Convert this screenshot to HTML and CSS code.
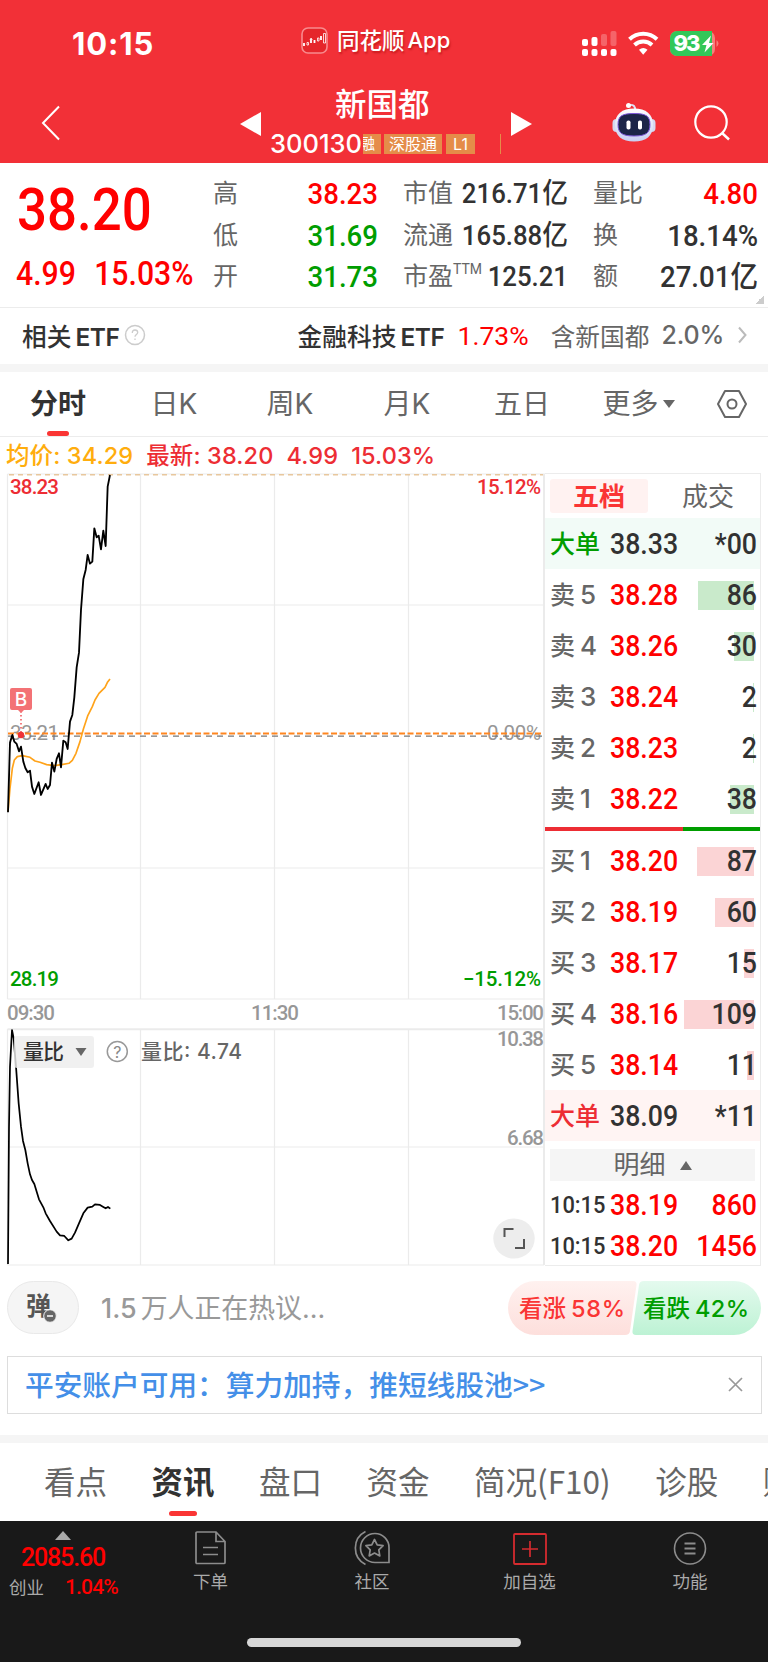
FILE: index.html
```
<!DOCTYPE html>
<html lang="zh-CN">
<head>
<meta charset="utf-8">
<title>新国都 300130</title>
<link rel="stylesheet" href="styles.css">
</head>
<body>
<div class="app">
  <header class="header">
    <div class="status">
      <div class="status-time">10:15</div>
      <div class="status-app">
        <svg width="27" height="27" viewBox="0 0 27 27"><rect x="1" y="1" width="25" height="25" rx="6" fill="#e5262b" stroke="#f88b8e" stroke-width="1.6"/><path d="M3 16v3M10 12v4M13.500 13v3M20 9v4" stroke="#fff" stroke-width="1.800"/><path d="M6 15.500h1.500v2.500H6zM16.500 11H18v3h-1.500zM22.500 6.500h2v9.500h-2zM9 12.500l1-1.500 1.500 1.500" fill="none" stroke="#fff" stroke-width=".8"/></svg>
        <span>同花顺</span><span class="app-en">App</span>
      </div>
      <svg class="status-icons" width="140" height="26" viewBox="0 0 140 26">
        <g fill="#fff"><rect x="0" y="8" width="6" height="7" rx="2"/><rect x="9.500" y="6" width="6" height="9" rx="2"/><rect x="0" y="18" width="6" height="7" rx="2"/><rect x="9.500" y="18" width="6" height="7" rx="2"/><rect x="19" y="18" width="6" height="7" rx="2"/><rect x="28.500" y="18" width="6" height="7" rx="2"/></g>
        <g fill="#fff" opacity=".25"><rect x="19" y="3" width="6" height="12" rx="2"/><rect x="28.500" y="0" width="6" height="15" rx="2"/></g>
        <g fill="none" stroke="#fff" stroke-width="4"><path d="M47.500 8.300a20 20 0 0 1 27.500 0"/><path d="M52.500 14a13 13 0 0 1 17.500 0"/></g>
        <path d="M57 18.700a7 7 0 0 1 8.500 0L61.200 23.700z" fill="#fff"/>
        <rect x="88" y="0" width="45" height="25" rx="7" fill="#f77f7c"/>
        <path d="M95 0h35v25h-35a7 7 0 0 1-7-7V7a7 7 0 0 1 7-7z" fill="#32c759"/>
        <path d="M134.500 9q4 3.500 0 7z" fill="#f77f7c"/>
        <text x="91.500" y="20" class="battery-text" textLength="27">93</text>
        <path d="M129 4.500l-9 9.500h4.500l-2 7.500 9-9.500h-4.500z" fill="#fff"/>
      </svg>
    </div>
    <div class="nav">
      <svg class="back" width="20" height="36" viewBox="0 0 20 36"><path d="M18 1.500L2 18l16 16.500" fill="none" stroke="#fff" stroke-width="2"/></svg>
      <svg class="prev" width="21" height="24" viewBox="0 0 21 24"><path d="M21 0v24L0 12z" fill="#fff"/></svg>
      <div class="stock">
        <h1>新国都</h1>
        <div class="code-row"><span class="code">300130</span><span class="tag tag-cut">融</span><span class="tag tag-wide">深股通</span><span class="tag tag-l1">L1</span><span class="tag-edge"></span></div>
      </div>
      <svg class="next" width="21" height="24" viewBox="0 0 21 24"><path d="M0 0v24l21-12z" fill="#fff"/></svg>
      <svg class="robot" width="44" height="40" viewBox="0 0 44 40">
        <defs><linearGradient id="shell" x1="0" y1="0" x2="0" y2="1"><stop offset="0" stop-color="#fff"/><stop offset="1" stop-color="#c9cff2"/></linearGradient></defs>
        <path d="M17 3q7-1 6 6" fill="none" stroke="#dfe1f4" stroke-width="2"/><circle cx="16.500" cy="3.500" r="2.500" fill="#fff"/>
        <rect x=".5" y="17" width="9" height="13" rx="4" fill="#d5d8f0"/><rect x="34.500" y="17" width="9" height="13" rx="4" fill="#d5d8f0"/>
        <path d="M22 6.500C34 6.500 41 12 41 23S34 39.500 22 39.500 3 34 3 23 10 6.500 22 6.500z" fill="url(#shell)"/>
        <path d="M22 11.500C34 11.500 38 14 38 22.500S34 34 22 34 6 31 6 22.500 10 11.500 22 11.500z" fill="#1c2548" stroke="#7d57d9"/>
        <rect x="14.500" y="18.500" width="4" height="9" rx="1.800" fill="#fff"/><rect x="26" y="18.500" width="4" height="9" rx="1.800" fill="#fff"/>
      </svg>
      <svg class="search" width="36" height="36" viewBox="0 0 36 36"><circle cx="17" cy="17" r="15.700" fill="none" stroke="#fff" stroke-width="2.200"/><path d="M28 28l7 6.500" stroke="#fff" stroke-width="2.500"/></svg>
    </div>
  </header>

  <section class="quote">
    <div class="last">
      <div class="last-price"><span>38.20</span></div>
      <div class="last-change"><span>4.99</span><span class="pct">15.03%</span></div>
    </div>
    <div class="stats">
      <dl><dt>高</dt><dd class="up">38.23</dd><dt>低</dt><dd class="down">31.69</dd><dt>开</dt><dd class="down">31.73</dd></dl>
      <dl><dt>市值</dt><dd>216.71亿</dd><dt>流通</dt><dd>165.88亿</dd><dt>市盈<sup>TTM</sup></dt><dd>125.21</dd></dl>
      <dl><dt>量比</dt><dd class="up">4.80</dd><dt>换</dt><dd class="wide">18.14%</dd><dt>额</dt><dd class="wide">27.01亿</dd></dl>
    </div>
    <i class="corner"></i>
  </section>

  <section class="etf">
    <b>相关<span class="etf-latin">ETF</span></b>
    <svg class="etf-help" width="22" height="22" viewBox="0 0 22 22"><circle cx="11" cy="11" r="9.500" fill="none" stroke="#ccc" stroke-width="1.500"/><path d="M8.300 9q0-3 2.700-3t2.700 2.500c0 1.800-2.700 2.200-2.700 4.200M11 14.500v1.500" fill="none" stroke="#ccc" stroke-width="1.300"/></svg>
    <b class="etf-name">金融科技<span class="etf-latin">ETF</span></b>
    <span class="etf-rate din">1.73%</span>
    <span class="etf-part">含新国都</span>
    <span class="etf-weight">2.0%</span>
    <svg width="9" height="18" viewBox="0 0 9 18"><path d="M1 1.500l6.500 7.500L1 16.500" fill="none" stroke="#bbb" stroke-width="2"/></svg>
  </section>
  <div class="band"></div>

  <nav class="periods">
    <span class="active">分时</span><span>日K</span><span>周K</span><span>月K</span><span>五日</span><span class="more">更多<i></i></span>
    <svg width="32" height="30" viewBox="0 0 32 30"><path d="M9 2h14l7 13-7 13H9L2 15z" fill="none" stroke="#666" stroke-width="2" stroke-linejoin="round"/><circle cx="16" cy="15" r="4.500" fill="none" stroke="#666" stroke-width="2"/></svg>
  </nav>
  <div class="readout"><span class="avg">均价: 34.29</span><span>最新: 38.20</span><span>4.99</span><span>15.03%</span></div>

  <main class="market">
    <svg class="chart" width="545" height="793" viewBox="0 473 545 793">
      <g fill="none" stroke="#ebebeb" stroke-width="1.200">
        <path d="M7.500 474H761M7.500 605H544M7.500 868H544M7.500 999H544M7.500 1147H544M7.500 1265H544"/>
        <path d="M7.500 1029.300H544" stroke-width="2"/>
        <path d="M7.500 474V999M7.500 1029V1265M140.500 474V999M140.500 1029V1265M274.500 474V999M274.500 1029V1265M408.500 474V999M408.500 1029V1265"/>
        <path d="M544 474V1265" stroke-width="2"/>
      </g>
      <path d="M9 474.700H543" stroke="#e8c79d" stroke-width="1.500" stroke-dasharray="5 4"/>
      <g class="axis">
        <text x="10" y="735" dy="4.500" class="flat" textLength="49">33.21</text>
        <text x="487" y="735" dy="4.500" class="flat" textLength="54">0.00%</text>
      </g>
      <path d="M8 733.500H543" stroke="#ff8620" stroke-width="2" stroke-dasharray="6 2.500"/>
      <path d="M8 736.200H543" stroke="#777" stroke-width="1.200" stroke-dasharray="6 5"/>
      <g class="axis">
        <text x="10" y="494" class="t-red" textLength="49">38.23</text>
        <text x="477" y="494" class="t-red" textLength="64">15.12%</text>
        <text x="10" y="986" class="t-green" textLength="49">28.19</text>
        <text x="463" y="986" class="t-green" textLength="78">−15.12%</text>
        <text x="7" y="1020" textLength="48">09:30</text>
        <text x="251" y="1020" textLength="48">11:30</text>
        <text x="497" y="1020" textLength="47">15:00</text>
        <text x="497" y="1046" textLength="47">10.38</text>
        <text x="507" y="1145" textLength="37">6.68</text>
      </g>
      <g fill="none" stroke-linejoin="round">
        <g transform="translate(0 460) scale(.3333)">
          <path d="M24 1055L30 985 37 925 43 900 52 890 67 887 90 892 105 903 120 907 140 914 163 917 185 914 207 910 217 901 228 880 240 845 250 808 263 768 277 740 285 720 297 700 315 682 323 666 330 657" stroke="#ffa31a" stroke-width="5"/>
          <path d="M24 1057L30 848 37 825 43 845 50 852 57 874 63 860 70 905 76 924 83 937 90 932 96 980 103 1002 116 967 123 1005 137 972 143 987 150 975 156 908 163 935 170 897 177 880 183 922 190 842 197 847 203 867 210 785 217 765 223 712 230 622 237 578 243 450 250 358 257 330 263 285 270 311 277 305 283 205 290 232 296 227 303 268 310 212 317 258 323 80 330 45" stroke="#000" stroke-width="5.500"/>
        </g>
      </g>
      <path d="M21 711V733" stroke="#ef5055" stroke-width="1.500" stroke-dasharray="1.500 2.500"/>
      <circle cx="21" cy="735" r="3.200" fill="#ee3338"/>
      <path d="M12 688h18a2 2 0 0 1 2 2v18a2 2 0 0 1-2 2h-6l-3 3-3-3h-6a2 2 0 0 1-2-2v-18a2 2 0 0 1 2-2z" fill="#f37275"/>
      <text x="21" y="706" class="buy-mark">B</text>
      <path transform="translate(0 960) scale(.3333)" d="M24 912L27 500 30 320 36 210 41 235 48 320 56 430 63 500 69 543 76 570 83 610 90 643 96 660 103 672 117 718 130 742 137 760 150 783 170 815 180 826 193 828 205 841 215 836 225 818 237 790 250 760 263 743 277 740 285 733 300 735 310 741 317 745 324 741 331 746" fill="none" stroke="#000" stroke-width="5.200" stroke-linejoin="round"/>
      <rect x="14" y="1036" width="80" height="32" rx="3" fill="#ededed" opacity=".82"/>
      <text x="23" y="1059" class="ind-name" textLength="41">量比</text>
      <path d="M75.500 1048h11l-5.500 8z" fill="#666"/>
      <circle cx="117.300" cy="1051.500" r="10" fill="none" stroke="#999" stroke-width="1.500"/>
      <text x="117.300" y="1057.500" class="help-mark">?</text>
      <text x="141" y="1059" class="ind-value" textLength="101">量比: 4.74</text>
      <ellipse cx="514" cy="1238.500" rx="20.700" ry="20" fill="#ededed"/>
      <path d="M504.500 1237V1229H513.500M515 1248H524V1239" fill="none" stroke="#555" stroke-width="2"/>
    </svg>

    <aside class="book">
      <div class="book-tabs"><span class="active">五档</span><span>成交</span></div>
      <div class="row big-sell"><span class="big">大单</span><span class="price">38.33</span><span class="vol">*00</span></div>
      <div class="row sell"><span>卖<em>5</em></span><span class="price">38.28</span><i style="width:56px"></i><span class="vol">86</span></div>
      <div class="row sell"><span>卖<em>4</em></span><span class="price">38.26</span><i style="width:20px"></i><span class="vol">30</span></div>
      <div class="row sell"><span>卖<em>3</em></span><span class="price">38.24</span><i style="width:1px"></i><span class="vol">2</span></div>
      <div class="row sell"><span>卖<em>2</em></span><span class="price">38.23</span><i style="width:1px"></i><span class="vol">2</span></div>
      <div class="row sell"><span>卖<em>1</em></span><span class="price">38.22</span><i style="width:24px"></i><span class="vol">38</span></div>
      <div class="ratio"><i style="width:64.300%"></i></div>
      <div class="row buy"><span>买<em>1</em></span><span class="price">38.20</span><i style="width:57px"></i><span class="vol">87</span></div>
      <div class="row buy"><span>买<em>2</em></span><span class="price">38.19</span><i style="width:39px"></i><span class="vol">60</span></div>
      <div class="row buy"><span>买<em>3</em></span><span class="price">38.17</span><i style="width:10px"></i><span class="vol">15</span></div>
      <div class="row buy"><span>买<em>4</em></span><span class="price">38.16</span><i style="width:70px"></i><span class="vol">109</span></div>
      <div class="row buy"><span>买<em>5</em></span><span class="price">38.14</span><i style="width:7px"></i><span class="vol">11</span></div>
      <div class="row big-buy"><span class="big">大单</span><span class="price">38.09</span><span class="vol">*11</span></div>
      <div class="detail">明细<i></i></div>
      <div class="trade"><span class="time">10:15</span><span class="price">38.19</span><span class="vol">860</span></div>
      <div class="trade"><span class="time">10:15</span><span class="price">38.20</span><span class="vol">1456</span></div>
    </aside>
  </main>

  <section class="talk">
    <div class="danmu"><span>弹</span><svg width="14" height="14" viewBox="0 0 14 14"><circle cx="7" cy="7" r="6.300" fill="#666" stroke="#f5f5f5"/><path d="M4 7h6" stroke="#fff" stroke-width="1.500"/></svg></div>
    <div class="talk-text"><span class="talk-num">1.5</span>万人正在热议…</div>
    <div class="vote">
      <svg width="253" height="54" viewBox="0 0 253 54">
        <defs><linearGradient id="rise" x1="0" y1="0" x2="0" y2="1"><stop offset="0" stop-color="#fff1ef"/><stop offset="1" stop-color="#fddfdc"/></linearGradient><linearGradient id="fall" x1="0" y1="0" x2="0" y2="1"><stop offset="0" stop-color="#e4faee"/><stop offset="1" stop-color="#bdf2d4"/></linearGradient></defs>
        <path d="M27 0H125Q129 0 128.500 4L122 50Q121.500 54 117 54H27A27 27 0 0 1 27 0z" fill="url(#rise)"/>
        <path d="M136 0H226A27 27 0 0 1 226 54H128Q124 54 124.500 50L131 4Q131.500 0 136 0z" fill="url(#fall)"/>
        <g class="vote-up"><text x="11" y="36">看涨</text><text x="63" y="35.500" textLength="54">58%</text></g>
        <g class="vote-down"><text x="135" y="36">看跌</text><text x="187" y="35.500" textLength="54">42%</text></g>
      </svg>
    </div>
  </section>

  <section class="notice">
    <span>平安账户可用：算力加持，推短线股池&gt;&gt;</span>
    <svg width="15" height="15" viewBox="0 0 15 15"><path d="M1 1l13 13M14 1L1 14" stroke="#999" stroke-width="1.700"/></svg>
  </section>
  <div class="band band-low"></div>

  <nav class="topics"><span>看点</span><span class="active">资讯</span><span>盘口</span><span>资金</span><span class="profile">简况(F10)</span><span>诊股</span><span>财务</span></nav>

  <footer class="dock">
    <div class="index"><i></i><b>2085.60</b><div><span>创业</span><em>1.04%</em></div></div>
    <div class="dock-item order"><svg width="32" height="36" viewBox="0 0 32 36"><g fill="none" stroke="#8c8c8c" stroke-width="1.700"><path d="M3 2H21L30 11.500V32.500a1 1 0 0 1-1 1H2a1 1 0 0 1-1-1V3a1 1 0 0 1 1-1zM21 2V11.500H30M8 17.500H23M8 24.500H23"/></g></svg><span>下单</span></div>
    <div class="dock-item club"><svg width="36" height="36" viewBox="0 0 36 36"><g fill="none" stroke="#8c8c8c" stroke-width="1.700"><path d="M21 3.500A14 14 0 0 1 35 17.500V32.500H21A14.500 14.500 0 0 1 21 3.500zM11.500 1.500A18.500 18.500 0 0 0 11.500 34.500"/><path stroke-linejoin="round" d="M20.500 9.500l2.700 5.300 5.900.9-4.300 4.200 1 6-5.300-2.800-5.300 2.800 1-6-4.300-4.200 5.900-.9z"/></g></svg><span>社区</span></div>
    <div class="dock-item add"><svg width="36" height="36" viewBox="0 0 36 36"><rect x="2" y="4" width="32" height="30" rx="1" fill="none" stroke="#d42b2f" stroke-width="1.800"/><path d="M18 11v16M10 19h16" stroke="#d42b2f" stroke-width="1.700"/></svg><span>加自选</span></div>
    <div class="dock-item tools"><svg width="34" height="36" viewBox="0 0 34 36"><circle cx="17" cy="18.500" r="15.500" fill="none" stroke="#8c8c8c" stroke-width="1.600"/><path d="M11.500 13.500h11M11.500 18.500h11M11.500 23.500h11" stroke="#8c8c8c" stroke-width="1.800"/></svg><span>功能</span></div>
    <i class="home"></i>
  </footer>
</div>
</body>
</html>
```
FILE: styles.css
```
* { box-sizing: border-box; }
body { margin: 0; background: #fff; font-family: Inter, "Noto Sans CJK SC", sans-serif; color: #323232; }
i, em { font-style: normal; }
svg { display: block; flex: none; }
.app { width: 768px; height: 1662px; overflow: hidden; }
.din { font-family: Roboto, "Noto Sans CJK SC", sans-serif; }

.header { height: 163px; background: #f23037; color: #fff; }
.status { display: flex; height: 84px; padding-top: 27px; }
.status-time { width: 301px; padding-left: 72px; font-size: 31px; line-height: 34px; font-weight: 700; letter-spacing: .9px; }
.status-app { display: flex; width: 281px; height: 27px; line-height: 27px; font-size: 23px; font-weight: 500; text-shadow: 1px 2px 2px #9007; }
.status-app span:nth-child(2) { margin-left: 9px; font-size: 22.500px; }
.app-en { margin-left: 3px; font-size: 22px; }
.status-icons { margin-top: 4px; }
.battery-text { font: 800 22px Inter, sans-serif; fill: #fff; }
.nav { display: flex; height: 79px; align-items: flex-start; }
.back { margin: 21px 0 0 41px; }
.prev { margin: 28px 0 0 179px; }
.stock { width: 242px; margin-left: 9px; }
.next { margin: 28px 0 0 -1px; }
.robot { margin: 18px 0 0 80px; }
.search { margin: 21px 0 0 38px; }
h1 { margin: 2px 0 0 65px; font-size: 31.500px; line-height: 38px; font-weight: 500; }
.code-row { display: flex; height: 26px; margin-top: 6px; }
.code { width: 93px; font-size: 25.500px; line-height: 27px; letter-spacing: 0; font-weight: 500; white-space: nowrap; }
.tag { height: 20px; margin-top: 4px; background: #e58c49; line-height: 20px; text-align: center; white-space: nowrap; }
.tag-cut { display: flex; justify-content: flex-end; width: 18px; padding-right: 6px; overflow: hidden; font-size: 15px; }
.tag-wide { width: 58px; margin-left: 3px; font-size: 16px; }
.tag-l1 { width: 29px; margin-left: 4px; font-size: 16px; }
.tag-edge { width: 1px; height: 20px; margin: 4px 0 0 25px; background: #e58c49; }

.quote { display: flex; position: relative; height: 145px; border-bottom: 1px solid #ececec; font-family: Roboto, "Noto Sans CJK SC", sans-serif; font-weight: 500; }
.last { width: 213px; color: #f00; white-space: nowrap; }
.last-price { height: 78px; margin: 8px 0 0 17px; font-size: 60px; line-height: 78px; transform: scaleX(.88); transform-origin: left; }
.last-change { display: flex; height: 40px; font-size: 33px; line-height: 40px; margin: 5px 0 0 16px; transform: scaleX(.915); transform-origin: left; }
.pct { margin-left: 20px; }
.stats { display: grid; grid-template-columns: 164px 164px 164px; column-gap: 26px; padding-top: 10px; }
.stats dl { display: grid; grid-template-columns: 50px 115px; grid-auto-rows: 41.500px; margin: 0; line-height: 41.500px; white-space: nowrap; }
dt { color: #666; font-size: 25px; font-weight: 400; }
dd { display: flex; justify-content: flex-end; margin: 0; font-size: 30px; transform: scaleX(.92); transform-origin: right; }
dl:nth-child(2) dd { font-size: 28px; transform: scaleX(.92); }
sup { font-size: 14px; line-height: 1; vertical-align: 11px; }
.up { color: #f00; }
.down { color: #009d00; }
.corner { position: absolute; right: 4px; bottom: 3px; width: 9px; height: 9px; background: linear-gradient(135deg, #fff 50%, #ccc 50%); }
.etf { display: flex; align-items: center; height: 56px; padding: 0 21px 2px 22px; font-size: 24.700px; white-space: nowrap; }
.etf b { font-weight: 500; }
.etf-latin { margin-left: 4px; font-size: 24.500px; font-weight: 600; letter-spacing: -.4px; }
.etf-help { margin-left: 4px; }
.etf-name { margin-left: 152px; }
.etf-rate { margin-left: 13px; color: #f00; font-size: 26.500px; }
.etf-part { margin-left: 22px; color: #666; }
.etf-weight { flex: 1; margin-left: 12px; color: #666; font-size: 25px; letter-spacing: -.1px; font-weight: 500; }
.band { height: 8px; background: #f5f5f5; }
.periods { display: grid; grid-template-columns: 116px 116px 116px 118px 112px 114px 76px; height: 65px; border-bottom: 1px solid #ececec; align-items: start; font-size: 28px; line-height: 65px; color: #666; font-weight: 400; text-align: center; }
.periods svg { margin: 17px 0 0 24px; }
.periods .active { color: #323232; font-weight: 700; position: relative; }
.periods .active::after { content: ""; position: absolute; left: 47px; top: 59px; width: 22px; height: 5px; border-radius: 3px; background: #fa3534; }
.periods .more { padding-left: 7px; }
.more i { display: inline-block; margin: 0 0 6px 4px; border: 6px solid transparent; border-top: 8px solid #666; border-bottom: 0; }
.readout { display: flex; gap: 13px; height: 36px; padding-left: 6px; color: #ed2d34; font-size: 23.500px; line-height: 38px; letter-spacing: .12px; font-weight: 500; white-space: nowrap; }
.avg { color: #ffad0d; }

.market { display: flex; height: 793px; }
.axis text { font-family: Roboto, sans-serif; font-size: 20.500px; font-weight: 500; fill: #979797; }
.axis .flat { font-weight: 400; }
.axis .t-red { fill: #ed2d34; }
.axis .t-green { fill: #009d00; }
.buy-mark { font: 500 19px Inter, sans-serif; fill: #fff; text-anchor: middle; }
.ind-name { font: 500 21px "Noto Sans CJK SC", sans-serif; fill: #323232; }
.ind-value { font: 500 21px Inter, "Noto Sans CJK SC", sans-serif; fill: #666; }
.help-mark { font: 400 16px Inter, sans-serif; fill: #888; text-anchor: middle; }
.book { width: 216px; border: 1px solid #ececec; border-left: 0; }
.book-tabs { display: flex; height: 44px; padding: 5px 0 0 5px; font-size: 26px; line-height: 36px; color: #666; }
.book-tabs span { width: 98px; height: 34px; text-align: center; }
.book-tabs span + span { margin-left: 11px; }
.book-tabs .active { background: #fff2f1; color: #fa3534; font-weight: 700; border-radius: 3px; }
.row, .trade { display: grid; grid-template-columns: 60px 74px 73px; align-items: center; height: 51px; padding-left: 5px; font-size: 25px; line-height: 52px; color: #666; font-weight: 500; white-space: nowrap; }
.row > *, .trade > * { grid-row: 1; }
.row em { margin-left: 5px; font-size: 26px; }
.price, .vol { font: 500 29.500px/52px Roboto, sans-serif; color: #f00; transform: scaleX(.905); transform-origin: left; }
.price { grid-column: 2; }
.vol { grid-column: 3; color: #323232; transform-origin: right; text-align: right; z-index: 1; }
.row i { grid-column: 3; justify-self: end; height: 29px; margin-right: 3px; background: #c9eacb; }
.buy i { background: #fbd4d5; }
.big-sell { background: #f2fbf7; }
.big-buy { background: #fff4f3; }
.big-sell .big { color: #009d00; }
.big-buy .big { color: #ed2d34; }
.big-sell, .big-buy, .big-sell .price, .big-buy .price, .big-sell .vol, .big-buy .vol { line-height: 53px; }
.big-sell .price, .big-buy .price { color: #323232; }
.ratio { height: 4px; margin: 3px 0 4px; background: #009d00; }
.ratio i { display: block; height: 4px; background: #ed2d34; }
.detail { display: flex; justify-content: center; align-items: center; gap: 14px; height: 32px; margin: 8px 5px 3px; background: #f5f5f5; font-size: 26px; line-height: 32px; color: #666; }
.detail i { border: 6px solid transparent; border-bottom: 9px solid #666; border-top: 0; }
.trade { height: 41px; line-height: 43px; }
.trade .price, .trade .vol { line-height: 43px; color: #f00; }
.time { font-family: Roboto, sans-serif; font-size: 24px; color: #323232; transform: scaleX(.91); transform-origin: left; }

.talk { display: flex; height: 90px; padding-top: 15px; }
.danmu { display: flex; width: 72px; height: 53px; margin-left: 7px; border: 1px solid #e9e9e9; border-radius: 27px; background: #f5f5f5; padding-left: 18px; font-size: 25px; line-height: 49px; font-weight: 700; color: #555; }
.danmu svg { margin: 27px 0 0 -8px; }
.talk-text { width: 407px; margin-left: 22px; font-size: 26.900px; line-height: 54px; color: #999; white-space: nowrap; }
.talk-num { margin-right: 4px; font-weight: 500; }
.vote-up, .vote-down { font: 500 23.500px Inter, "Noto Sans CJK SC", sans-serif; fill: #fa3534; }
.vote-down { fill: #009d00; }
.notice { display: flex; justify-content: space-between; align-items: center; width: 755px; height: 58px; margin-left: 7px; padding: 0 18px 3px 17px; border: 1px solid #ddd; color: #448fe8; font-family: "Noto Sans CJK SC", sans-serif; font-size: 28.700px; font-weight: 500; white-space: nowrap; }
.notice svg { margin-top: 2px; }
.band-low { margin-top: 21px; }
.topics { display: flex; gap: 44.500px; height: 78px; padding-left: 44px; overflow: hidden; font-size: 31.500px; line-height: 75px; color: #666; white-space: nowrap; font-family: "Noto Sans CJK SC", sans-serif; }
.topics span { flex: none; }
.topics .active { position: relative; font-weight: 700; color: #323232; }
.topics .active::after { content: ""; position: absolute; left: 17px; top: 68px; width: 28px; height: 5px; border-radius: 3px; background: #fa3534; }
.dock { position: relative; display: grid; grid-template-columns: 126px 171px 150px 165px 156px; height: 141px; background: #191919; color: #aaa; }
.index { padding-top: 10px; text-align: center; }
.index i { display: block; width: 16px; height: 9px; margin: 0 auto; background: #aaa; clip-path: polygon(50% 0, 100% 100%, 0 100%); }
.index b { display: block; color: #f00; font: 500 25px/35px Roboto, sans-serif; letter-spacing: -1.200px; }
.index div { display: flex; justify-content: space-between; padding: 0 8px 0 9px; font-size: 17.500px; line-height: 25px; }
.index em { color: #f00; font: 500 21px/25px Roboto, sans-serif; letter-spacing: -.8px; }
.dock-item { display: flex; flex-direction: column; align-items: center; padding-top: 9px; font-size: 17.500px; line-height: 28px; font-family: "Noto Sans CJK SC", sans-serif; }
.dock-item span { margin-top: 1px; }
.order { padding-right: 2px; }
.home { position: absolute; left: 247px; bottom: 15px; width: 274px; height: 9px; border-radius: 5px; background: #d7d7d7; }
```
